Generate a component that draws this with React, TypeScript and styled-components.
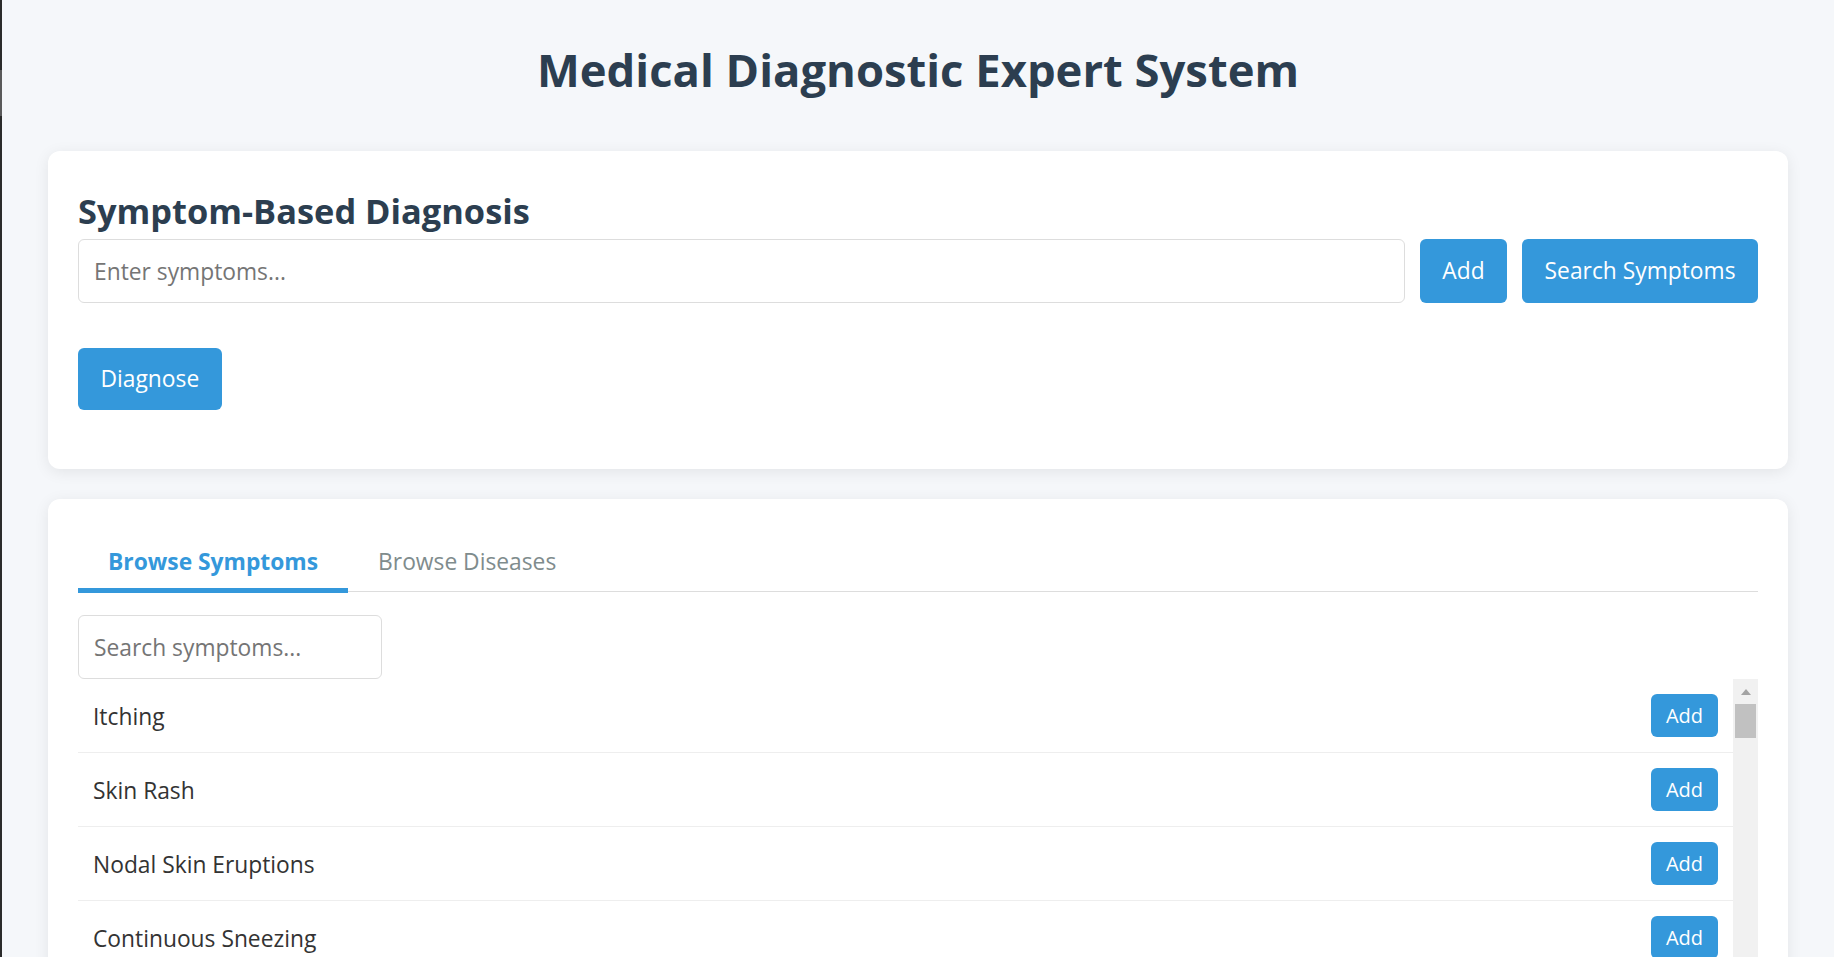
import React from "react";
import styled, { createGlobalStyle, css } from "styled-components";

const GlobalStyle = createGlobalStyle`
  html, body {
    margin: 0;
    padding: 0;
    overflow: hidden;
    background: #f5f7fa;
  }
  * { box-sizing: border-box; }
  body {
    font-family: "Open Sans", "Noto Sans", Arial, sans-serif;
    color: #333;
  }
`;

const FONT = `"Open Sans", "Noto Sans", Arial, sans-serif`;

const Page = styled.div`
  min-height: 100vh;
  border-left: 2px solid #2b2b2b;
  border-image: linear-gradient(
      to bottom,
      #2b2b2b 71px,
      #5a5a5a 71px,
      #5a5a5a 117px,
      #2b2b2b 117px
    )
    1;
  padding: 40px 46px 0;
`;

const Title = styled.h1`
  margin: 0 0 53px;
  text-align: center;
  font-size: 45.4px;
  line-height: 58px;
  font-weight: 700;
  color: #2c3e50;
`;

const Card = styled.section`
  background: #fff;
  border-radius: 12px;
  box-shadow: 0 3px 15px rgba(0, 0, 0, 0.08);
  padding: 30px;
  margin-bottom: 30px;
`;

const SectionTitle = styled.h2`
  margin: 8px 0 7px;
  font-size: 34.4px;
  line-height: 43px;
  font-weight: 700;
  color: #2c3e50;
`;

const InputRow = styled.div`
  display: flex;
  gap: 15px;
`;

const TextInput = styled.input<{ $width?: number }>`
  font-family: ${FONT};
  font-size: 22.8px;
  height: 64px;
  padding: 0 15px;
  border: 1px solid #ddd;
  border-radius: 6px;
  color: #333;
  background: #fff;
  outline: none;
  ${(p) =>
    p.$width
      ? css`
          width: ${p.$width}px;
          display: block;
          margin-top: 23px;
        `
      : css`
          flex: 1;
          min-width: 0;
        `}
  &::placeholder {
    color: #757575;
  }
`;

const Button = styled.button<{ $standalone?: boolean }>`
  font-family: ${FONT};
  font-size: 22.8px;
  line-height: 32px;
  padding: 15px 22.5px;
  border: none;
  border-radius: 6px;
  background: #3498db;
  color: #fff;
  cursor: pointer;
  white-space: nowrap;
  ${(p) =>
    p.$standalone &&
    css`
      display: block;
      margin: 45px 0 29px;
    `}
`;

const Tabs = styled.div`
  display: flex;
  border-bottom: 1px solid #ddd;
`;

const Tab = styled.button<{ $active?: boolean }>`
  font-family: ${FONT};
  font-size: 22.8px;
  line-height: 29px;
  padding: 18px 30px 12px;
  margin-bottom: -2px;
  background: none;
  border: none;
  border-bottom: 5px solid ${(p) => (p.$active ? "#3498db" : "transparent")};
  color: ${(p) => (p.$active ? "#3498db" : "#7f8c8d")};
  font-weight: ${(p) => (p.$active ? 700 : 400)};
  cursor: pointer;
`;

const ListFrame = styled.div`
  display: flex;
  height: 600px;
`;

const ListBody = styled.div`
  flex: 1;
  min-width: 0;
  overflow-y: auto;
  scrollbar-width: none;
  &::-webkit-scrollbar {
    display: none;
  }
`;

const ScrollTrack = styled.div`
  width: 25px;
  flex: none;
  background: #f1f1f1;
  display: flex;
  flex-direction: column;
`;

const ScrollArrow = styled.div`
  height: 25px;
  display: flex;
  justify-content: center;
  padding-top: 10px;

  &::before {
    content: "";
    width: 0;
    height: 0;
    border-left: 5.5px solid transparent;
    border-right: 5.5px solid transparent;
    border-bottom: 6px solid #a3a3a3;
  }
`;

const ScrollThumb = styled.div`
  height: 34px;
  margin: 0 2px;
  background: #c1c1c1;
`;

const Row = styled.div`
  display: flex;
  align-items: center;
  justify-content: space-between;
  padding: 15px;
  border-bottom: 1px solid #eee;
`;

const RowLabel = styled.span`
  font-size: 22.8px;
  line-height: 32px;
  padding-top: 2px;
  color: #333;
`;

const SmallButton = styled.button`
  font-family: ${FONT};
  font-size: 20px;
  line-height: 29px;
  height: 43px;
  padding: 0 15px;
  border: none;
  border-radius: 6px;
  background: #3498db;
  color: #fff;
  cursor: pointer;
`;

const RAW = `itching skin_rash nodal_skin_eruptions continuous_sneezing shivering chills joint_pain stomach_pain acidity ulcers_on_tongue muscle_wasting vomiting burning_micturition spotting_urination fatigue weight_gain anxiety cold_hands_and_feets mood_swings weight_loss restlessness lethargy patches_in_throat irregular_sugar_level cough high_fever sunken_eyes breathlessness sweating dehydration indigestion headache yellowish_skin dark_urine nausea loss_of_appetite pain_behind_the_eyes back_pain constipation abdominal_pain diarrhoea mild_fever yellow_urine yellowing_of_eyes acute_liver_failure fluid_overload swelling_of_stomach swelled_lymph_nodes malaise blurred_and_distorted_vision phlegm throat_irritation redness_of_eyes sinus_pressure runny_nose congestion chest_pain weakness_in_limbs fast_heart_rate pain_during_bowel_movements pain_in_anal_region bloody_stool irritation_in_anus neck_pain dizziness cramps bruising obesity swollen_legs swollen_blood_vessels puffy_face_and_eyes enlarged_thyroid brittle_nails swollen_extremeties excessive_hunger extra_marital_contacts drying_and_tingling_lips slurred_speech knee_pain hip_joint_pain muscle_weakness stiff_neck swelling_joints movement_stiffness spinning_movements loss_of_balance unsteadiness weakness_of_one_body_side loss_of_smell bladder_discomfort foul_smell_of_urine continuous_feel_of_urine passage_of_gases internal_itching toxic_look_(typhos) depression irritability muscle_pain altered_sensorium red_spots_over_body belly_pain abnormal_menstruation dischromic_patches watering_from_eyes increased_appetite polyuria family_history mucoid_sputum rusty_sputum lack_of_concentration visual_disturbances receiving_blood_transfusion receiving_unsterile_injections coma stomach_bleeding distention_of_abdomen history_of_alcohol_consumption blood_in_sputum prominent_veins_on_calf palpitations painful_walking pus_filled_pimples blackheads scurring skin_peeling silver_like_dusting small_dents_in_nails inflammatory_nails blister red_sore_around_nose yellow_crust_ooze`;

const SYMPTOMS = RAW.split(" ").map((s) =>
  s
    .split("_")
    .map((w) => w.charAt(0).toUpperCase() + w.slice(1))
    .join(" ")
);

export default function App() {
  return (
    <>
      <GlobalStyle />
      <Page>
        <Title>Medical Diagnostic Expert System</Title>
        <Card>
          <SectionTitle>Symptom-Based Diagnosis</SectionTitle>
          <InputRow>
            <TextInput placeholder="Enter symptoms..." />
            <Button>Add</Button>
            <Button>Search Symptoms</Button>
          </InputRow>
          <Button $standalone>Diagnose</Button>
        </Card>
        <Card>
          <Tabs>
            <Tab $active>Browse Symptoms</Tab>
            <Tab>Browse Diseases</Tab>
          </Tabs>
          <TextInput $width={304} placeholder="Search symptoms..." />
          <ListFrame>
            <ListBody>
              {SYMPTOMS.map((s) => (
                <Row key={s}>
                  <RowLabel>{s}</RowLabel>
                  <SmallButton>Add</SmallButton>
                </Row>
              ))}
            </ListBody>
            <ScrollTrack>
              <ScrollArrow />
              <ScrollThumb />
            </ScrollTrack>
          </ListFrame>
        </Card>
      </Page>
    </>
  );
}
